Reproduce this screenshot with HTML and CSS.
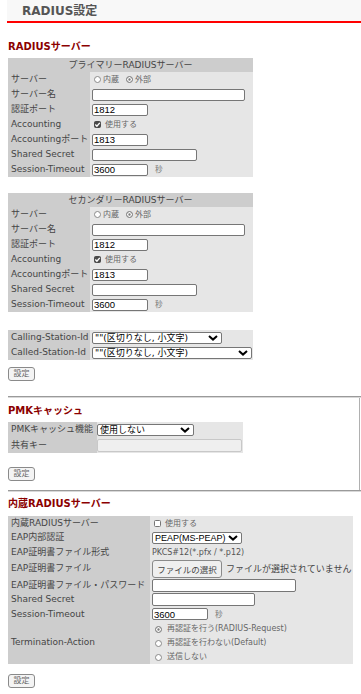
FILE: index.html
```html
<!DOCTYPE html>
<html lang="ja">
<head>
<meta charset="utf-8">
<title>RADIUS設定</title>
<link rel="stylesheet" href="styles.css">
</head>
<body>
<header class="titlebar"><h1 class="title">RADIUS設定</h1></header>
<main class="content">
  <h2 class="sec sec-first">RADIUSサーバー</h2>
  <table class="tbl tbl-srv">
    <colgroup><col class="c-srv"><col></colgroup>
    <tr class="caprow"><th colspan="2" class="cap">プライマリーRADIUSサーバー</th></tr>
    <tr><td class="lbl">サーバー</td><td class="val"><span class="radio"></span><span class="opt opt-sm">内蔵</span><span class="radio on"></span><span class="opt opt-sm">外部</span></td></tr>
    <tr><td class="lbl">サーバー名</td><td class="val"><input class="txt w-name" type="text"></td></tr>
    <tr><td class="lbl">認証ポート</td><td class="val"><input class="txt w-port" type="text" value="1812"></td></tr>
    <tr><td class="lbl">Accounting</td><td class="val"><span class="check on"><svg viewBox="0 0 7 7" width="7" height="7"><path d="M1.3 3.6 L2.9 5.2 L5.8 1.9" fill="none" stroke="#fff" stroke-width="1.4"/></svg></span><span class="opt">使用する</span></td></tr>
    <tr><td class="lbl">Accountingポート</td><td class="val"><input class="txt w-port" type="text" value="1813"></td></tr>
    <tr><td class="lbl">Shared Secret</td><td class="val"><input class="txt w-secret" type="text"></td></tr>
    <tr><td class="lbl">Session-Timeout</td><td class="val"><input class="txt w-port" type="text" value="3600"><span class="unit">秒</span></td></tr>
  </table>

  <table class="tbl tbl-srv tbl-second">
    <colgroup><col class="c-srv"><col></colgroup>
    <tr class="caprow"><th colspan="2" class="cap">セカンダリーRADIUSサーバー</th></tr>
    <tr><td class="lbl">サーバー</td><td class="val"><span class="radio"></span><span class="opt opt-sm">内蔵</span><span class="radio on"></span><span class="opt opt-sm">外部</span></td></tr>
    <tr><td class="lbl">サーバー名</td><td class="val"><input class="txt w-name" type="text"></td></tr>
    <tr><td class="lbl">認証ポート</td><td class="val"><input class="txt w-port" type="text" value="1812"></td></tr>
    <tr><td class="lbl">Accounting</td><td class="val"><span class="check on"><svg viewBox="0 0 7 7" width="7" height="7"><path d="M1.3 3.6 L2.9 5.2 L5.8 1.9" fill="none" stroke="#fff" stroke-width="1.4"/></svg></span><span class="opt">使用する</span></td></tr>
    <tr><td class="lbl">Accountingポート</td><td class="val"><input class="txt w-port" type="text" value="1813"></td></tr>
    <tr><td class="lbl">Shared Secret</td><td class="val"><input class="txt w-secret" type="text"></td></tr>
    <tr><td class="lbl">Session-Timeout</td><td class="val"><input class="txt w-port" type="text" value="3600"><span class="unit">秒</span></td></tr>
  </table>

  <table class="tbl tbl-srv tbl-call">
    <colgroup><col class="c-srv"><col></colgroup>
    <tr><td class="lbl">Calling-Station-Id</td><td class="val"><span class="selwrap w-sel1"><select class="sel"><option>""(区切りなし, 小文字)</option></select><svg class="chev" viewBox="0 0 10 6" width="10" height="6"><path d="M1 1 L5 4.6 L9 1" fill="none" stroke="#000" stroke-width="2"/></svg></span></td></tr>
    <tr><td class="lbl">Called-Station-Id</td><td class="val"><span class="selwrap w-sel2"><select class="sel"><option>""(区切りなし, 小文字)</option></select><svg class="chev" viewBox="0 0 10 6" width="10" height="6"><path d="M1 1 L5 4.6 L9 1" fill="none" stroke="#000" stroke-width="2"/></svg></span></td></tr>
  </table>

  <button class="btn btn-1" type="button">設定</button>

  <hr class="rule rule-1">

  <section class="pmk">
    <h2 class="sec sec-pmk">PMKキャッシュ</h2>
    <table class="tbl tbl-pmk">
      <colgroup><col class="c-pmk"><col></colgroup>
      <tr><td class="lbl">PMKキャッシュ機能</td><td class="val"><span class="selwrap w-sel3"><select class="sel"><option>使用しない</option></select><svg class="chev" viewBox="0 0 10 6" width="10" height="6"><path d="M1 1 L5 4.6 L9 1" fill="none" stroke="#000" stroke-width="2"/></svg></span></td></tr>
      <tr class="row16"><td class="lbl">共有キー</td><td class="val"><input class="txt txt-off w-key" type="text" disabled></td></tr>
    </table>
    <button class="btn btn-2" type="button">設定</button>
  </section>

  <hr class="rule rule-2">

  <h2 class="sec sec-int">内蔵RADIUSサーバー</h2>
  <table class="tbl tbl-int">
    <colgroup><col class="c-int"><col></colgroup>
    <tr class="row14"><td class="lbl">内蔵RADIUSサーバー</td><td class="val"><span class="check"></span><span class="opt">使用する</span></td></tr>
    <tr><td class="lbl">EAP内部認証</td><td class="val"><span class="selwrap w-sel4"><select class="sel sel-latin"><option>PEAP(MS-PEAP)</option></select><svg class="chev" viewBox="0 0 10 6" width="10" height="6"><path d="M1 1 L5 4.6 L9 1" fill="none" stroke="#000" stroke-width="2"/></svg></span></td></tr>
    <tr class="row14"><td class="lbl">EAP証明書ファイル形式</td><td class="val"><span class="note">PKCS#12(*.pfx / *.p12)</span></td></tr>
    <tr class="row19"><td class="lbl">EAP証明書ファイル</td><td class="val"><button class="filebtn" type="button">ファイルの選択</button><span class="nofile">ファイルが選択されていません</span></td></tr>
    <tr class="row14"><td class="lbl">EAP証明書ファイル・パスワード</td><td class="val"><input class="txt w-pw" type="password"></td></tr>
    <tr><td class="lbl">Shared Secret</td><td class="val"><input class="txt w-secret2" type="text"></td></tr>
    <tr class="row14"><td class="lbl">Session-Timeout</td><td class="val"><input class="txt w-port" type="text" value="3600"><span class="unit">秒</span></td></tr>
    <tr class="row43"><td class="lbl">Termination-Action</td><td class="val">
      <div class="radline"><span class="radio on"></span><span class="opt">再認証を行う(RADIUS-Request)</span></div>
      <div class="radline"><span class="radio"></span><span class="opt">再認証を行わない(Default)</span></div>
      <div class="radline"><span class="radio"></span><span class="opt">送信しない</span></div>
    </td></tr>
  </table>

  <button class="btn btn-3" type="button">設定</button>
</main>
</body>
</html>
```

FILE: styles.css
```css
* { box-sizing: border-box; }
html, body { margin: 0; padding: 0; }
body {
  font-family: "DejaVu Sans", "Noto Sans CJK JP", sans-serif;
  font-size: 9px;
  color: #454545;
  background: #fff;
}

.titlebar {
  margin-left: 7px;
  height: 23px;
  padding: 4px 0 0 15px;
  background: #f8f8f8;
  border-bottom: 2px solid #ff0000;
}
.title {
  margin: 0;
  font-size: 12px;
  line-height: 15px;
  font-weight: bold;
  color: #555;
}

.content { padding: 0 8px; }

.sec {
  margin: 0;
  font-size: 10px;
  line-height: 14px;
  font-weight: bold;
  color: #8b0000;
}
.sec-first { margin-top: 17px; }
.sec-pmk { margin-top: 6px; }
.sec-int { margin-top: 5px; }

.tbl {
  border-collapse: collapse;
  border-spacing: 0;
  table-layout: fixed;
  margin-top: 4px;
}
.tbl td, .tbl th {
  padding: 0;
  line-height: 13px;
  white-space: nowrap;
  vertical-align: middle;
}
.tbl tr { height: 15px; }
.tbl tr.caprow { height: 14px; }
.tbl tr.row14 { height: 14px; }
.tbl tr.row16 { height: 16px; }
.tbl tr.row19 { height: 19px; }
.tbl tr.row43 { height: 43px; }

.cap {
  background: #cdcdcd;
  font-weight: normal;
  text-align: center;
}
.tbl .lbl { background: #cdcdcd; padding-left: 3px; }
.tbl .val { background: #e6e6e6; padding-left: 2px; }

.tbl-srv { width: 245px; }
.c-srv { width: 82px; }
.tbl-second { margin-top: 16px; }
.tbl-call { margin-top: 18px; }

.tbl-pmk { width: 235px; }
.c-pmk { width: 89px; }
.tbl-pmk .val { padding-left: 0; }

.tbl-int { width: 345px; margin-top: 5px; }
.c-int { width: 142px; }

/* text inputs */
.txt {
  display: inline-block;
  height: 12px;
  margin: 0;
  padding: 0 1px;
  border: 1px solid #767676;
  border-radius: 2px;
  background: #fff;
  font-family: "Liberation Sans", Arial, sans-serif;
  font-size: 9.5px;
  color: #000;
  vertical-align: middle;
}
.txt-off { background: #efefef; border-color: #c8c8c8; }
.w-name { width: 153px; }
.w-port { width: 56px; }
.w-secret { width: 105px; }
.w-key { width: 145px; height: 13px; }
.w-pw { width: 144px; height: 13px; }
.w-secret2 { width: 103px; height: 13px; }

.unit {
  margin-left: 7px;
  font-size: 7.5px;
  color: #777;
  vertical-align: middle;
}

/* radio & checkbox */
.radio {
  display: inline-block;
  width: 7px;
  height: 7px;
  margin: 0 2px 0 2px;
  border: 1px solid #8a8a8a;
  border-radius: 50%;
  background: #fff;
  vertical-align: middle;
}
.radio.on {
  background: #7a7a7a;
  box-shadow: inset 0 0 0 1.3px #fff;
}
.check {
  display: inline-block;
  width: 7px;
  height: 7px;
  margin: 0 4px 0 2px;
  border: 1px solid #767676;
  border-radius: 1.5px;
  background: #fff;
  vertical-align: middle;
  position: relative;
}
.check.on { background: #4a4a4a; border-color: #4a4a4a; }
.check svg { position: absolute; left: -1px; top: -1px; display: block; }
.opt {
  margin-right: 4px;
  font-size: 8px;
  color: #666;
  vertical-align: middle;
}
.opt-sm { margin-right: 5px; }
.radline { height: 14px; line-height: 14px; }
.radline .radio { margin: 0 5px 0 3px; }

/* selects */
.selwrap {
  position: relative;
  display: inline-block;
  height: 12px;
  vertical-align: middle;
}
.sel {
  display: block;
  -webkit-appearance: none;
  appearance: none;
  width: 100%;
  height: 12px;
  margin: 0;
  padding: 0 0 0 2px;
  border: 1px solid #767676;
  border-radius: 2px;
  background: #fff;
  font-family: "DejaVu Sans", "Noto Sans CJK JP", sans-serif;
  font-size: 9px;
  line-height: 10px;
  color: #000;
}
.sel-latin { font-family: "Liberation Sans", Arial, sans-serif; font-size: 9px; }
.chev { position: absolute; right: 4px; top: 3px; pointer-events: none; }
.w-sel1 { width: 130px; }
.w-sel2 { width: 160px; }
.w-sel3 { width: 97px; }
.w-sel4 { width: 90px; }

.note {
  font-size: 8px;
  color: #555;
}

.filebtn {
  display: inline-block;
  width: 70px;
  height: 18px;
  margin: 0 4px 0 0;
  padding: 0;
  border: 1px solid #8a8a8a;
  border-radius: 3px;
  background: #efefef;
  font-family: "DejaVu Sans", "Noto Sans CJK JP", sans-serif;
  font-size: 8.5px;
  color: #444;
  vertical-align: middle;
}
.nofile { font-size: 9px; color: #444; vertical-align: middle; }

/* buttons */
.btn {
  display: block;
  width: 27px;
  height: 14px;
  padding: 0;
  border: 1px solid #8a8a8a;
  border-radius: 3px;
  background: #f4f4f4;
  font-family: "DejaVu Sans", "Noto Sans CJK JP", sans-serif;
  font-size: 8px;
  line-height: 12px;
  color: #666;
}
.btn-1 { margin-top: 7px; }
.btn-2 { margin-top: 14px; }
.btn-3 { margin-top: 10px; }

/* rules and sections */
.rule {
  height: 0;
  margin: 0 -8px 0 0;
  border: 0;
  border-top: 1px solid #9a9a9a;
  border-bottom: 1px solid #d8d8d8;
}
.rule-1 { margin-top: 15px; }
.pmk {
  margin-right: -7px;
  padding-bottom: 9px;
  border-right: 1px solid #b0b0b0;
  overflow: hidden;
}
```
